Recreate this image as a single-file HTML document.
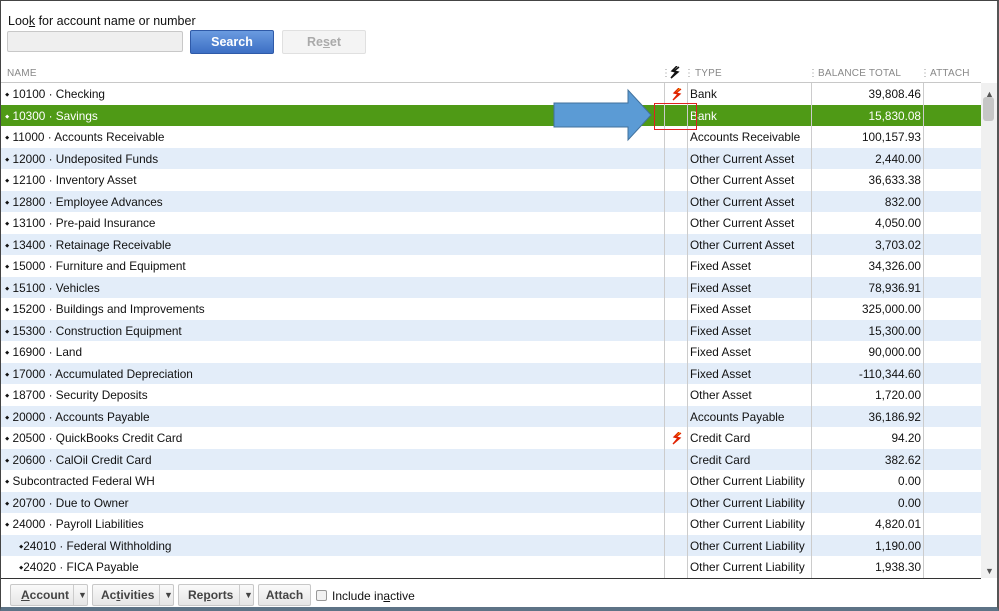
<!DOCTYPE html>
<html><head><meta charset="utf-8"><style>
*{margin:0;padding:0;box-sizing:border-box}
body{width:999px;height:611px;overflow:hidden;background:#fff;font-family:"Liberation Sans",Arial,sans-serif;font-size:12px;color:#111;position:relative}
.frame{position:absolute;left:0;top:0;width:999px;height:611px;border-left:1px solid #444;border-right:2px solid #555;border-top:1px solid #444;border-bottom:4px solid #5d7386}
.lbl{position:absolute;left:8px;top:14px;font-size:12.5px}
.inp{position:absolute;left:7px;top:31px;width:176px;height:21px;background:#efefef;border:1px solid #c8c8c8;border-radius:2px}
.srch{position:absolute;left:190px;top:30px;width:84px;height:24px;background:linear-gradient(#6a9be0,#3d6fc4);border:1px solid #2f5aa8;border-radius:2px;color:#fff;font-weight:bold;text-align:center;line-height:22px;font-size:12.5px}
.rst{position:absolute;left:282px;top:30px;width:84px;height:24px;background:#f4f4f4;border:1px solid #e0e0e0;border-radius:2px;color:#aaa;font-weight:bold;text-align:center;line-height:22px;font-size:12.5px}
.hdr{position:absolute;top:68px;font-size:10px;color:#888;letter-spacing:.2px}
.hline{position:absolute;left:1px;top:82px;width:980px;height:1px;background:#c8c8c8}
.rows{position:absolute;left:1px;top:83px;width:980px;font-size:11.8px}
.r{height:21.5px;position:relative;white-space:nowrap}
.r.sel{background:#4f9a16!important;color:#fff}
.r span{position:absolute;top:4px}
.n{left:4px}
.t{left:689px}
.b{right:60px;text-align:right}
.z{left:671px;top:5px!important}
.vl{position:absolute;top:83px;height:495px;width:1px;background:#ccc}
.bl{position:absolute;left:1px;top:578px;width:980px;height:1px;background:#333}
.sb{position:absolute;left:981px;top:83px;width:16px;height:495px;background:#f0f0f0}
.btn{position:absolute;top:584px;height:22px;background:linear-gradient(#fafafa,#e6e6e6);border:1px solid #c8c8c8;border-radius:2px;font-weight:bold;color:#444;line-height:20px;font-size:12px}
</style></head><body>
<div class="lbl">Loo<u>k</u> for account name or number</div>
<div class="inp"></div>
<div class="srch">Search</div>
<div class="rst">Re<u>s</u>et</div>
<div class="hdr" style="left:7px">NAME</div>
<div class="hdr" style="left:661px;color:#999">⋮</div>
<svg style="position:absolute;left:670px;top:66px" width="10" height="13"><path d="M7 0 L2 5 L6 6 L1 12 L8 6 L4 5 L9 1" fill="none" stroke="#111" stroke-width="1.5"/></svg>
<div class="hdr" style="left:684px;color:#999">⋮</div>
<div class="hdr" style="left:695px">TYPE</div>
<div class="hdr" style="left:808px;color:#999">⋮</div>
<div class="hdr" style="left:818px">BALANCE TOTAL</div>
<div class="hdr" style="left:920px;color:#999">⋮</div>
<div class="hdr" style="left:930px">ATTACH</div>
<div class="hline"></div>
<div class="rows">
<div class="r" style="background:#fff"><span class="n">⬩ 10100 · Checking</span><span class="z"><svg width="10" height="13"><path d="M7 0 L2 5 L6 6 L1 12 L8 6 L4 5 L9 1" fill="#ffd800" stroke="#e02000" stroke-width="1.3"/></svg></span><span class="t">Bank</span><span class="b">39,808.46</span></div>
<div class="r sel"><span class="n">⬩ 10300 · Savings</span><span class="t">Bank</span><span class="b">15,830.08</span></div>
<div class="r" style="background:#fff"><span class="n">⬩ 11000 · Accounts Receivable</span><span class="t">Accounts Receivable</span><span class="b">100,157.93</span></div>
<div class="r" style="background:#e3edf9"><span class="n">⬩ 12000 · Undeposited Funds</span><span class="t">Other Current Asset</span><span class="b">2,440.00</span></div>
<div class="r" style="background:#fff"><span class="n">⬩ 12100 · Inventory Asset</span><span class="t">Other Current Asset</span><span class="b">36,633.38</span></div>
<div class="r" style="background:#e3edf9"><span class="n">⬩ 12800 · Employee Advances</span><span class="t">Other Current Asset</span><span class="b">832.00</span></div>
<div class="r" style="background:#fff"><span class="n">⬩ 13100 · Pre-paid Insurance</span><span class="t">Other Current Asset</span><span class="b">4,050.00</span></div>
<div class="r" style="background:#e3edf9"><span class="n">⬩ 13400 · Retainage Receivable</span><span class="t">Other Current Asset</span><span class="b">3,703.02</span></div>
<div class="r" style="background:#fff"><span class="n">⬩ 15000 · Furniture and Equipment</span><span class="t">Fixed Asset</span><span class="b">34,326.00</span></div>
<div class="r" style="background:#e3edf9"><span class="n">⬩ 15100 · Vehicles</span><span class="t">Fixed Asset</span><span class="b">78,936.91</span></div>
<div class="r" style="background:#fff"><span class="n">⬩ 15200 · Buildings and Improvements</span><span class="t">Fixed Asset</span><span class="b">325,000.00</span></div>
<div class="r" style="background:#e3edf9"><span class="n">⬩ 15300 · Construction Equipment</span><span class="t">Fixed Asset</span><span class="b">15,300.00</span></div>
<div class="r" style="background:#fff"><span class="n">⬩ 16900 · Land</span><span class="t">Fixed Asset</span><span class="b">90,000.00</span></div>
<div class="r" style="background:#e3edf9"><span class="n">⬩ 17000 · Accumulated Depreciation</span><span class="t">Fixed Asset</span><span class="b">-110,344.60</span></div>
<div class="r" style="background:#fff"><span class="n">⬩ 18700 · Security Deposits</span><span class="t">Other Asset</span><span class="b">1,720.00</span></div>
<div class="r" style="background:#e3edf9"><span class="n">⬩ 20000 · Accounts Payable</span><span class="t">Accounts Payable</span><span class="b">36,186.92</span></div>
<div class="r" style="background:#fff"><span class="n">⬩ 20500 · QuickBooks Credit Card</span><span class="z"><svg width="10" height="13"><path d="M7 0 L2 5 L6 6 L1 12 L8 6 L4 5 L9 1" fill="#ffd800" stroke="#e02000" stroke-width="1.3"/></svg></span><span class="t">Credit Card</span><span class="b">94.20</span></div>
<div class="r" style="background:#e3edf9"><span class="n">⬩ 20600 · CalOil Credit Card</span><span class="t">Credit Card</span><span class="b">382.62</span></div>
<div class="r" style="background:#fff"><span class="n">⬩ Subcontracted Federal WH</span><span class="t">Other Current Liability</span><span class="b">0.00</span></div>
<div class="r" style="background:#e3edf9"><span class="n">⬩ 20700 · Due to Owner</span><span class="t">Other Current Liability</span><span class="b">0.00</span></div>
<div class="r" style="background:#fff"><span class="n">⬩ 24000 · Payroll Liabilities</span><span class="t">Other Current Liability</span><span class="b">4,820.01</span></div>
<div class="r" style="background:#e3edf9"><span class="n" style="left:18px">⬩24010 · Federal Withholding</span><span class="t">Other Current Liability</span><span class="b">1,190.00</span></div>
<div class="r" style="background:#fff"><span class="n" style="left:18px">⬩24020 · FICA Payable</span><span class="t">Other Current Liability</span><span class="b">1,938.30</span></div>
</div>
<div class="vl" style="left:664px"></div>
<div class="vl" style="left:687px"></div>
<div class="vl" style="left:811px"></div>
<div class="vl" style="left:923px"></div>
<div class="sb"><div style="position:absolute;left:4px;top:6px;font-size:9px;color:#555">▲</div><div style="position:absolute;left:2px;top:14px;width:11px;height:24px;background:#c6c6c6;border-radius:3px"></div><div style="position:absolute;left:4px;bottom:2px;font-size:9px;color:#555">▼</div></div>
<div class="bl"></div>
<svg style="position:absolute;left:550px;top:86px" width="110" height="58"><polygon points="4,17 78,17 78,4 101,29 78,54 78,41 4,41" fill="#5b9bd5" stroke="#41719c" stroke-width="1"/></svg>
<div style="position:absolute;left:654px;top:103px;width:43px;height:27px;border:1.5px solid #e02020"></div>
<div class="btn" style="left:10px;width:78px"><span style="padding-left:10px"><u>A</u>ccount</span><span style="position:absolute;left:62px;top:0;border-left:1px solid #ccc;padding-left:4px;font-size:9px">▼</span></div>
<div class="btn" style="left:92px;width:82px"><span style="padding-left:8px">Ac<u>t</u>ivities</span><span style="position:absolute;left:66px;top:0;border-left:1px solid #ccc;padding-left:4px;font-size:9px">▼</span></div>
<div class="btn" style="left:178px;width:76px"><span style="padding-left:9px">Re<u>p</u>orts</span><span style="position:absolute;left:60px;top:0;border-left:1px solid #ccc;padding-left:4px;font-size:9px">▼</span></div>
<div class="btn" style="left:258px;width:53px;text-align:center">Attach</div>
<div style="position:absolute;left:316px;top:590px;width:11px;height:11px;border:1px solid #999;background:#f2f2f2;border-radius:2px"></div>
<div style="position:absolute;left:332px;top:589px;font-size:12px">Include in<u>a</u>ctive</div>
<div class="frame"></div>
</body></html>
